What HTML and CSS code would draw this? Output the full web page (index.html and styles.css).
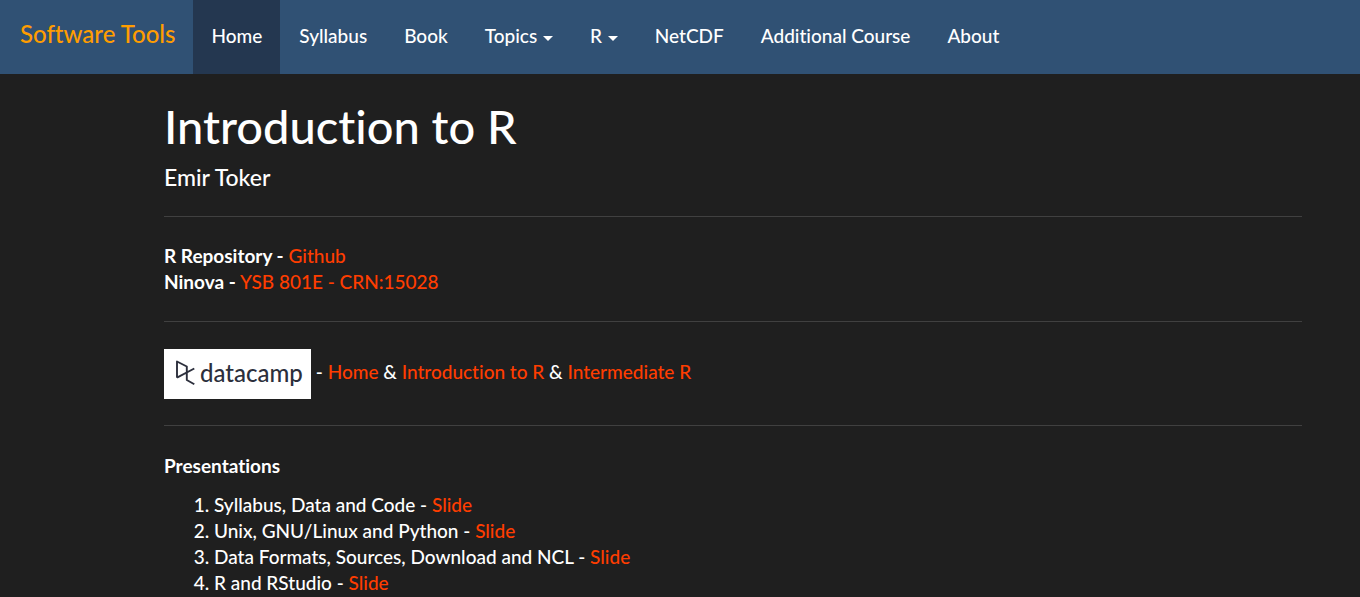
FILE: index.html
```
<!DOCTYPE html>
<html lang="en">
<head>
<meta charset="utf-8">
<title>Introduction to R</title>
<link rel="stylesheet" href="styles.css">
</head>
<body>
<nav class="navbar">
  <a class="brand" href="#">Software Tools</a>
  <ul class="menu">
    <li><a class="active" href="#">Home</a></li>
    <li><a href="#">Syllabus</a></li>
    <li><a href="#">Book</a></li>
    <li><a href="#">Topics <span class="caret"></span></a></li>
    <li><a href="#">R <span class="caret"></span></a></li>
    <li><a href="#">NetCDF</a></li>
    <li><a href="#">Additional Course</a></li>
    <li><a href="#">About</a></li>
  </ul>
</nav>
<main class="content">
  <h1>Introduction to R</h1>
  <h4>Emir Toker</h4>
  <hr>
  <p><strong>R Repository -</strong> <a href="#">Github</a><br><strong>Ninova -</strong> <a href="#">YSB 801E - CRN:15028</a></p>
  <hr>
  <p class="camp">
    <svg class="logo" viewBox="0 0 147 50" role="img" aria-label="datacamp">
      <rect width="147" height="50" fill="#fff"/>
      <path d="M13 28.7V12.5L22.8 17.5V31L30.3 35.3M13 28.7L30.3 19.5" fill="none" stroke="#2c2f3c" stroke-width="1.9" stroke-linejoin="round"/>
      <text class="logo-text" x="36" y="33">datacamp</text>
    </svg>
    - <a href="#">Home</a> &amp; <a href="#">Introduction to R</a> &amp; <a href="#">Intermediate R</a>
  </p>
  <hr>
  <p class="heading"><strong>Presentations</strong></p>
  <ol>
    <li>Syllabus, Data and Code - <a href="#">Slide</a></li>
    <li>Unix, GNU/Linux and Python - <a href="#">Slide</a></li>
    <li>Data Formats, Sources, Download and NCL - <a href="#">Slide</a></li>
    <li>R and RStudio - <a href="#">Slide</a></li>
  </ol>
</main>
</body>
</html>
```
FILE: styles.css
```
* { box-sizing: border-box; }
body { margin: 0; background: #1f1f1f; color: #fff; font: 500 19px/26px Lato, sans-serif; font-variant-ligatures: none; }
a { color: #ff3d00; text-decoration: none; }
.navbar { display: flex; background: #305174; }
.brand { padding: 19px 17px 21px 20px; font-size: 24px; line-height: 30px; color: #ff9d00; }
.menu { display: flex; margin: 0; padding: 0; list-style: none; }
.menu a { display: block; padding: 23px 18px 25px 19px; color: #fff; }
.menu .active { background: #243750; }
.caret { display: inline-block; margin-left: 1px; vertical-align: middle; border: 5px solid transparent; border-top-color: #fff; border-bottom: 0; }
.content { padding: 0 58px 0 164px; }
h1, h4 { font-weight: 500; margin: 0; }
h1 { padding-top: 24px; font-size: 47px; line-height: 56px; }
h4 { margin-top: 10px; font-size: 23px; line-height: 26px; }
hr { margin: 26px 0; border: 0; border-top: 1px solid #404040; }
p { margin: 0; }
.camp { padding-top: 1px; }
.logo { width: 147px; height: 50px; vertical-align: middle; }
.logo-text { font: 500 24px Lato, sans-serif; fill: #2c2f3c; }
.heading { padding-top: 1px; margin-bottom: 13px; }
ol { margin: 0; padding-left: 50px; }
```
